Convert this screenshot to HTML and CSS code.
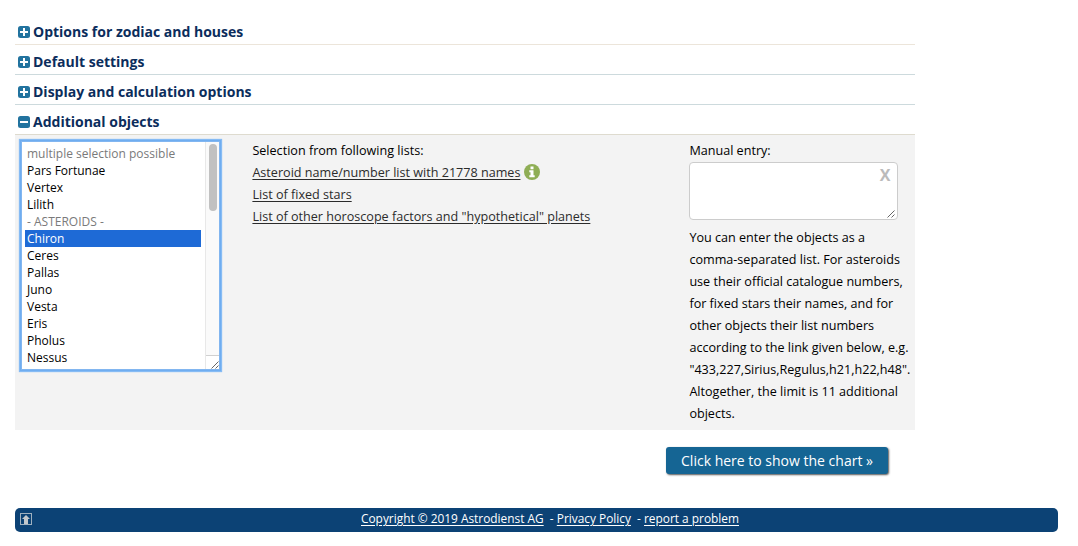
FILE: index.html
```html
<!DOCTYPE html>
<html lang="en">
  <head>
    <meta charset="UTF-8" />
    <meta name="viewport" content="width=device-width, initial-scale=1.0" />
    <title>Extended Chart Selection</title>
    <link rel="stylesheet" href="styles.css">
  </head>
  <body>
    <div class="container">
      <h3 class="section-title">
        <svg class="toggle" viewBox="0 0 12 12"><rect width="12" height="12" rx="2.5" /><path d="M2 6h8M6 2v8" /></svg>
        <span>Options for zodiac and houses</span>
      </h3>
      <h3 class="section-title cool">
        <svg class="toggle" viewBox="0 0 12 12"><rect width="12" height="12" rx="2.5" /><path d="M2 6h8M6 2v8" /></svg>
        <span>Default settings</span>
      </h3>
      <h3 class="section-title cool">
        <svg class="toggle" viewBox="0 0 12 12"><rect width="12" height="12" rx="2.5" /><path d="M2 6h8M6 2v8" /></svg>
        <span>Display and calculation options</span>
      </h3>
      <h3 class="section-title open">
        <svg class="toggle" viewBox="0 0 12 12"><rect width="12" height="12" rx="2.5" /><path d="M2 6h8" /></svg>
        <span>Additional objects</span>
      </h3>

      <div class="panel">
        <!-- list box -->
        <div class="listbox">
          <ul class="options">
            <li class="disabled">multiple selection possible</li>
            <li>Pars Fortunae</li>
            <li>Vertex</li>
            <li>Lilith</li>
            <li class="disabled">- ASTEROIDS -</li>
            <li class="selected">Chiron</li>
            <li>Ceres</li>
            <li>Pallas</li>
            <li>Juno</li>
            <li>Vesta</li>
            <li>Eris</li>
            <li>Pholus</li>
            <li>Nessus</li>
          </ul>
          <div class="scrollbar">
            <div class="thumb"></div>
            <div class="corner">
              <svg class="grip" viewBox="0 0 8 8"><path d="M0.5 7.5l7-7M4.5 7.5l3-3" /></svg>
            </div>
          </div>
        </div>

        <!-- links -->
        <div class="lists">
          <p>Selection from following lists:</p>
          <p class="with-info">
            <a href="#">Asteroid name/number list with 21778 names</a>
            <svg class="info" viewBox="0 0 16 16"><circle cx="8" cy="8" r="8" /><path d="M6.5 2.5h3v2.7h-3zM5.3 6.3h4.2v5h1.2v1.9H5.3v-1.9h1.2V8.2H5.3z" /></svg>
          </p>
          <p><a href="#">List of fixed stars</a></p>
          <p><a href="#">List of other horoscope factors and "hypothetical" planets</a></p>
        </div>

        <!-- manual entry -->
        <div class="manual">
          <p>Manual entry:</p>
          <div class="entry">
            <span class="clear">X</span>
            <svg class="grip" viewBox="0 0 8 8"><path d="M0.5 7.5l7-7M4.5 7.5l3-3" /></svg>
          </div>
          <p>You can enter the objects as a<br>comma-separated list. For asteroids<br>use their official catalogue numbers,<br>for fixed stars their names, and for<br>other objects their list numbers<br>according to the link given below, e.g.<br>"433,227,Sirius,Regulus,h21,h22,h48".<br>Altogether, the limit is 11 additional<br>objects.</p>
        </div>
      </div>

      <div class="actions">
        <button class="submit" type="button">Click here to show the chart »</button>
      </div>
    </div>

    <div class="footer">
      <svg class="to-top" viewBox="0 0 12 12"><rect x="0.5" y="0.5" width="11" height="11" /><path d="M6 2l4 4H8v5H4V6H2z" /></svg>
      <div class="footer-links">
        <a href="#">Copyright © 2019 Astrodienst AG</a>&nbsp; - <a href="#">Privacy Policy</a>&nbsp; - <a href="#">report a problem</a>
      </div>
    </div>
  </body>
</html>
```
FILE: styles.css
```css
* {
  box-sizing: border-box;
}

body {
  margin: 0;
  padding: 15px 20px 0 15px;
  background: #fff;
  color: #000;
  font-family: "Open Sans", "Noto Sans", sans-serif;
  font-size: 12.6px;
  line-height: 22px;
}

p {
  margin: 0;
  white-space: nowrap;
}

.container {
  width: 900px;
}

/* section headings */
.section-title {
  display: flex;
  align-items: center;
  gap: 3px;
  height: 30px;
  margin: 0;
  padding: 4px 0 0 3px;
  border-bottom: 1px solid #ece5da;
  color: #0b2d5c;
  font-size: 14px;
  font-weight: 700;
}

.section-title.cool {
  border-bottom-color: #cddadd;
}

.section-title.open {
  border-bottom-color: #dedbcf;
}

.toggle {
  width: 12px;
  height: 12px;
  fill: #22739f;
}

.toggle path {
  stroke: #fff;
  stroke-width: 2;
}

/* additional objects */
.panel {
  display: flex;
  height: 295px;
  padding: 5px 0 0 4px;
  background: #f3f3f3;
}

.listbox {
  display: flex;
  width: 199px;
  height: 229px;
  margin: 1px 0 0 2px;
  background: #fff;
  box-shadow: inset 0 0 0 1px #82b6f0, 0 0 0 1px #6fadf0, 0 0 1px 2px #86bbf4;
}

.options {
  flex: 1;
  margin: 0;
  padding: 4px 4px 0;
  list-style: none;
  font-size: 12px;
  line-height: 17px;
}

.options li {
  height: 17px;
  padding-left: 2px;
  white-space: nowrap;
}

.options .disabled {
  color: #7a7a7a;
}

.options .selected {
  background: #1e6ad6;
  color: #fff;
}

.scrollbar {
  display: flex;
  flex-direction: column;
  justify-content: space-between;
  width: 14px;
  margin: 1px 1px 1px 0;
  padding-top: 2px;
  border-left: 1px solid #e8e8e8;
  background: #fafafa;
}

.thumb {
  width: 8px;
  height: 67px;
  margin-left: 3px;
  border-radius: 4px;
  background: #c1c1c1;
}

.corner {
  display: flex;
  align-items: flex-end;
  justify-content: flex-end;
  height: 14px;
  border-top: 1px solid #d0d0d0;
  background: #fff;
}

.grip {
  width: 8px;
  height: 8px;
  fill: none;
  stroke: #555;
  stroke-width: 0.9;
}

.lists {
  width: 437px;
  margin-left: 32.4px;
}

.lists a {
  color: #2b2b2b;
  text-underline-offset: 2px;
}

.with-info {
  display: flex;
  align-items: center;
  gap: 4px;
}

.info {
  width: 16px;
  height: 16px;
  margin-bottom: 2px;
  fill: #8fae55;
}

.info path {
  fill: #fff;
}

.entry {
  display: flex;
  flex-direction: column;
  align-items: flex-end;
  justify-content: space-between;
  width: 209px;
  height: 58px;
  margin: 0 0 7px;
  padding: 1px 2px 1px 0;
  border: 1px solid #ccc;
  border-radius: 4px;
  background: #fff;
}

.clear {
  margin-right: 5px;
  color: #bbb;
  font-size: 16px;
  font-weight: 700;
}

/* submit */
.actions {
  display: flex;
  justify-content: flex-end;
  padding: 17px 27px 0 0;
}

.submit {
  width: 222px;
  height: 27px;
  padding: 0;
  border: 0;
  border-radius: 3px;
  background: #156594;
  box-shadow: 1px 1px 2px #555;
  color: #fff;
  font-family: inherit;
  font-size: 14px;
}

/* footer */
.footer {
  display: flex;
  align-items: center;
  height: 24px;
  margin-top: 34px;
  padding-left: 5px;
  border-radius: 5px;
  background: #0c4275;
  color: #fff;
  font-size: 11.88px;
}

.to-top {
  width: 12px;
  height: 12px;
  margin-bottom: 2px;
  fill: #c4c8cc;
}

.to-top rect {
  fill: none;
  stroke: #9fb0bf;
}

.footer-links {
  margin-left: 329px;
  padding-bottom: 4px;
  white-space: nowrap;
}

.footer a {
  color: #fff;
  text-underline-offset: 2px;
}
```
